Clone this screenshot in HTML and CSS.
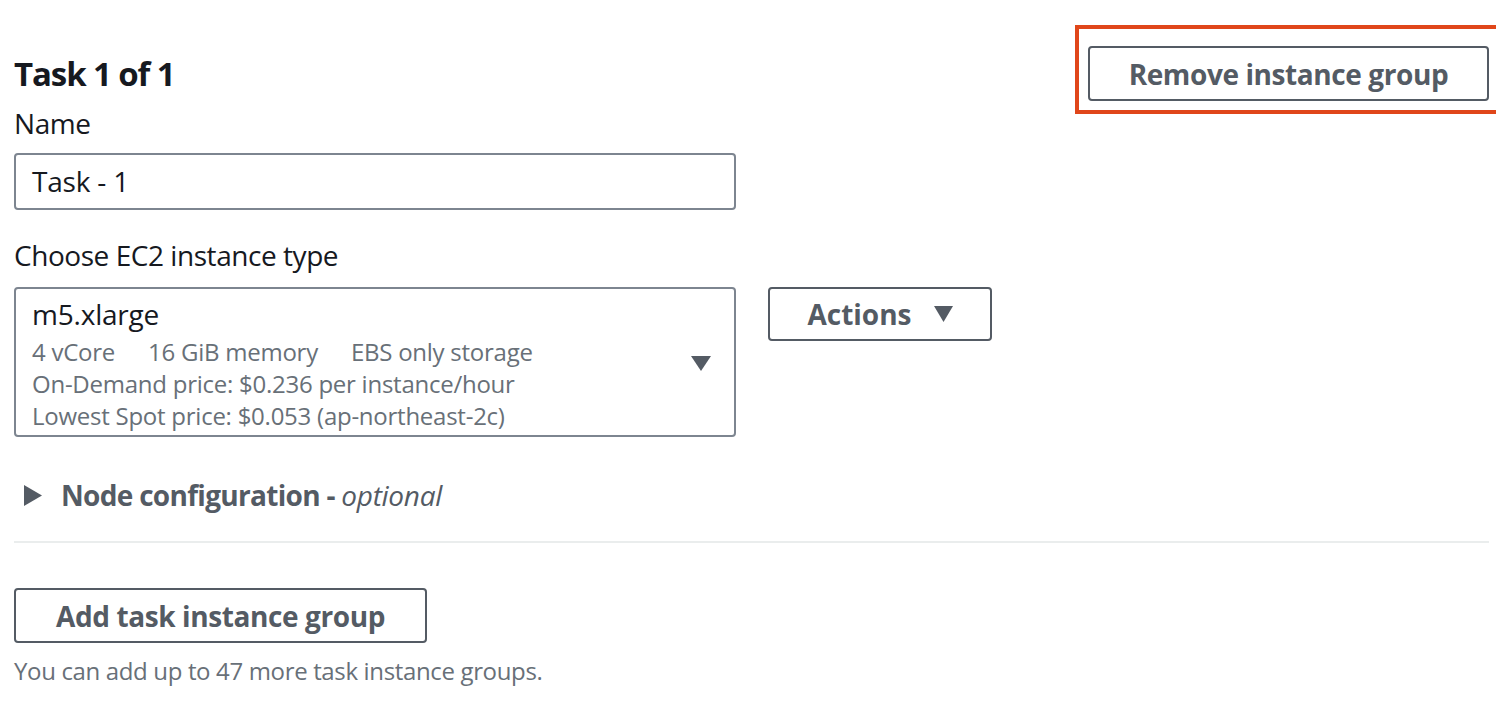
FILE: index.html
```html
<!DOCTYPE html>
<html lang="en">
<head>
<meta charset="utf-8">
<title>Task instance group</title>
<link rel="stylesheet" href="styles.css">
</head>
<body>
<div class="page">
  <div class="header">
    <h2 class="title">Task 1 of 1</h2>
    <div class="highlight">
      <button class="btn btn-remove" type="button">Remove instance group</button>
    </div>
  </div>

  <label class="label label-name">Name</label>
  <div class="input">Task - 1</div>

  <label class="label label-type">Choose EC2 instance type</label>
  <div class="type-row">
    <div class="select">
      <div class="select-body">
        <div class="select-title">m5.xlarge</div>
        <div class="select-meta">
          <div class="meta-line"><span class="spec">4 vCore</span><span class="spec">16 GiB memory</span><span class="spec">EBS only storage</span></div>
          <div class="meta-line">On-Demand price: $0.236 per instance/hour</div>
          <div class="meta-line">Lowest Spot price: $0.053 (ap-northeast-2c)</div>
        </div>
      </div>
      <svg class="caret caret-select" viewBox="0 0 20 15" width="20" height="15"><path d="M0 0 H20 L10 15 Z" fill="#545b64"/></svg>
    </div>
    <button class="btn btn-actions" type="button">Actions<svg class="caret caret-actions" viewBox="0 0 19 16" width="19" height="16"><path d="M0 0 H19 L9.5 16 Z" fill="#545b64"/></svg></button>
  </div>

  <div class="expander">
    <svg class="expander-icon" viewBox="0 0 18 21" width="18" height="21"><path d="M0 0 L18 10.5 L0 21 Z" fill="#545b64"/></svg>
    <span class="expander-text">Node configuration - <em>optional</em></span>
  </div>

  <div class="divider"></div>

  <button class="btn btn-add" type="button">Add task instance group</button>
  <p class="hint">You can add up to 47 more task instance groups.</p>
</div>
</body>
</html>
```

FILE: styles.css
```css
html, body {
  margin: 0;
  padding: 0;
  overflow: hidden;
  background: #ffffff;
}

body {
  font-family: "Open Sans", "Liberation Sans", sans-serif;
  color: #16191f;
}

.page {
  padding: 0 7px 0 14px;
}

.header {
  display: flex;
  justify-content: space-between;
  align-items: flex-start;
  height: 82px;
  padding-top: 25px;
}

.title {
  margin: 29px 0 0 0;
  font-size: 33px;
  line-height: 40px;
  font-weight: 700;
  letter-spacing: -1.1px;
  color: #16191f;
}

.highlight {
  border: 4px solid #e0461a;
  padding: 17px 9px 9px 9px;
  margin-right: -13px;
  flex: none;
}

.btn {
  font-family: "Open Sans", "Liberation Sans", sans-serif;
  font-size: 28px;
  font-weight: 700;
  letter-spacing: -0.4px;
  white-space: nowrap;
  color: #545b64;
  background: #ffffff;
  border: 2px solid #545b64;
  border-radius: 4px;
  box-sizing: border-box;
  height: 55px;
  padding: 0;
  display: flex;
  align-items: center;
  justify-content: center;
  cursor: pointer;
}

.btn-remove {
  width: 401px;
}

.label {
  display: block;
  font-size: 28px;
  line-height: 32px;
  letter-spacing: -0.45px;
  color: #16191f;
}

.input {
  margin-top: 14px;
  width: 722px;
  height: 57px;
  box-sizing: border-box;
  border: 2px solid #7d8590;
  border-radius: 4px;
  padding-left: 16px;
  font-size: 28px;
  line-height: 53px;
  letter-spacing: -0.2px;
  color: #16191f;
}

.label-type {
  margin-top: 29px;
}

.type-row {
  display: flex;
  align-items: flex-start;
  gap: 32px;
  margin-top: 16px;
}

.select {
  width: 722px;
  height: 150px;
  box-sizing: border-box;
  border: 2px solid #7d8590;
  border-radius: 4px;
  padding: 9px 23px 6px 16px;
  display: flex;
  align-items: center;
  justify-content: space-between;
}

.select-body {
  align-self: flex-start;
}

.select-title {
  font-size: 28px;
  line-height: 32px;
  letter-spacing: -0.2px;
  color: #16191f;
}

.select-meta {
  margin-top: 6px;
  font-size: 24px;
  line-height: 32px;
  letter-spacing: -0.25px;
  color: #687078;
}

.spec {
  margin-right: 33px;
}

.spec:last-child {
  margin-right: 0;
}

.caret-select {
  display: block;
  flex: none;
}

.btn-actions {
  width: 224px;
  height: 54px;
  gap: 22px;
  letter-spacing: 0;
}

.caret-actions {
  display: block;
  flex: none;
}

.expander {
  display: flex;
  align-items: center;
  margin-top: 42px;
  height: 32px;
  padding-left: 10px;
}

.expander-icon {
  display: block;
  flex: none;
  margin-right: 19px;
}

.expander-text {
  font-size: 28px;
  line-height: 32px;
  font-weight: 700;
  letter-spacing: -0.7px;
  color: #545b64;
}

.expander-text em {
  font-weight: 400;
  font-style: italic;
  letter-spacing: -0.3px;
}

.divider {
  margin-top: 30px;
  height: 2px;
  background: #eaeded;
}

.btn-add {
  margin-top: 45px;
  width: 413px;
}

.hint {
  margin: 12px 0 0 0;
  font-size: 24px;
  line-height: 31px;
  letter-spacing: -0.35px;
  color: #687078;
}
```
